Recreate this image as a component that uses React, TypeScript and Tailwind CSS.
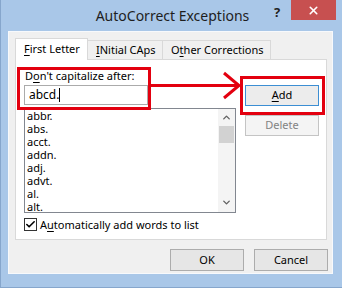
import { Check, ChevronDown, ChevronUp, X } from "lucide-react";

const items = ["abbr.", "abs.", "acct.", "addn.", "adj.", "advt.", "al.", "alt."];

const U = ({ c }: { c: string }) => <span className="underline underline-offset-2">{c}</span>;

export default function App() {
  return (
    <div
      className="relative w-[342px] h-[288px] bg-[#a9c7e8] border-l border-b border-[#86a6cc] flex flex-col text-[11px] text-black overflow-hidden whitespace-nowrap"
      style={{ fontFamily: '"Noto Sans", "Open Sans", sans-serif' }}>
      {/* title bar */}
      <div className="relative h-[31px] shrink-0 flex items-center justify-center">
        <span className="text-[14px] text-[#1e1e1e] pl-[2px] -mt-[1px]">AutoCorrect Exceptions</span>
        <span className="absolute left-[273px] top-[3px] text-[13px] font-bold text-[#222]">?</span>
        <div className="absolute left-[290px] top-0 w-[45px] h-[20px] bg-[#c75050] flex items-center justify-center">
          <X size={13} strokeWidth={3} className="text-white" />
        </div>
      </div>

      {/* client */}
      <div className="ml-[7px] mr-[9px] mb-[13px] flex-1 bg-[#f0f0f0] border border-[#f7f9fc] flex flex-col pl-[6px] pr-[6px]">
        {/* tabs */}
        <div className="flex items-end h-[27px] pt-[6px]">
          <div className="relative z-10 h-[22px] w-[73px] bg-white border border-b-0 border-[#d9d9d9] flex items-center pl-[8px] -mb-px">
            <U c="F" />irst Letter
          </div>
          <div className="h-[19px] w-[75px] bg-[#f0f0f0] border border-b-0 border-l-0 border-[#d9d9d9] flex items-center pl-[8px]">
            <U c="I" />Nitial CAps
          </div>
          <div className="h-[19px] w-[108px] bg-[#f0f0f0] border border-b-0 border-l-0 border-[#d9d9d9] flex items-center pl-[8px]">
            O<U c="t" />her Corrections
          </div>
        </div>

        {/* panel */}
        <div className="h-[181px] w-[312px] bg-white border border-[#d9d9d9] flex flex-col pl-[8px] pt-[8px]">
          <div className="flex gap-[9px]">
            <div className="w-[212px] flex flex-col">
              <div className="h-[17px] leading-[16px] pl-[1px]">
                D<U c="o" />n't capitalize after:
              </div>
              <div className="h-[20px] w-[124px] border border-[#ababab] flex items-center pl-[4px] leading-none text-[12px]">
                abcd.<span className="inline-block w-px h-[14px] bg-black" />
              </div>
              <div className="mt-[3px] h-[105px] border border-[#828790] flex">
                <div className="flex-1 flex flex-col pl-[2px] overflow-hidden">
                  {items.map((t) => (
                    <div key={t} className="h-[13px] leading-[13px] text-[11px]">
                      {t}
                    </div>
                  ))}
                </div>
                <div className="w-[17px] bg-[#f4f4f4] flex flex-col items-center">
                  <ChevronUp size={11} strokeWidth={3} className="text-[#606060] mt-[3px]" />
                  <div className="mt-[3px] w-[15px] h-[17px] bg-[#d2d2d2] bg-[radial-gradient(#bdbdbd_0.6px,transparent_0.6px)] bg-[length:2px_2px]" />
                  <div className="flex-1" />
                  <ChevronDown size={11} strokeWidth={3} className="text-[#606060] mb-[4px]" />
                </div>
              </div>
            </div>
            <div className="flex flex-col pt-[17px] gap-[9px]">
              <div className="w-[74px] h-[21px] border border-[#3c8ed3] bg-[#ececec] flex items-center justify-center">
                <U c="A" />dd
              </div>
              <div className="w-[74px] h-[21px] border border-[#c4c4c4] bg-[#f4f4f4] flex items-center justify-center text-[#838383]">
                Delete
              </div>
            </div>
          </div>
          <div className="mt-[5px] h-[13px] flex items-center gap-[3px] leading-none">
            <div className="w-[13px] h-[13px] border border-[#333] bg-white flex items-center justify-center">
              <Check size={11} strokeWidth={3.5} />
            </div>
            <span>
              A<U c="u" />tomatically add words to list
            </span>
          </div>
        </div>

        {/* buttons */}
        <div className="flex justify-end gap-[10px] mt-[9px] -mr-[2px]">
          <div className="w-[74px] h-[22px] border border-[#acacac] bg-[#e6e6e6] flex items-center justify-center">OK</div>
          <div className="w-[74px] h-[22px] border border-[#acacac] bg-[#e6e6e6] flex items-center justify-center">Cancel</div>
        </div>
      </div>

      {/* red annotations */}
      <div className="absolute left-[16px] top-[67px] w-[134px] h-[43px] border-[3px] border-[#e3000f]" />
      <div className="absolute left-[239px] top-[76px] w-[85px] h-[39px] border-[3px] border-[#e3000f]" />
      <svg className="absolute left-[148px] top-[70px]" width="95" height="32" viewBox="0 0 95 32">
        <line x1="1" y1="15.5" x2="89" y2="15.5" stroke="#e3000f" strokeWidth="3" />
        <polyline points="75,3 90,15.5 75,28" fill="none" stroke="#e3000f" strokeWidth="3" />
      </svg>
    </div>
  );
}
